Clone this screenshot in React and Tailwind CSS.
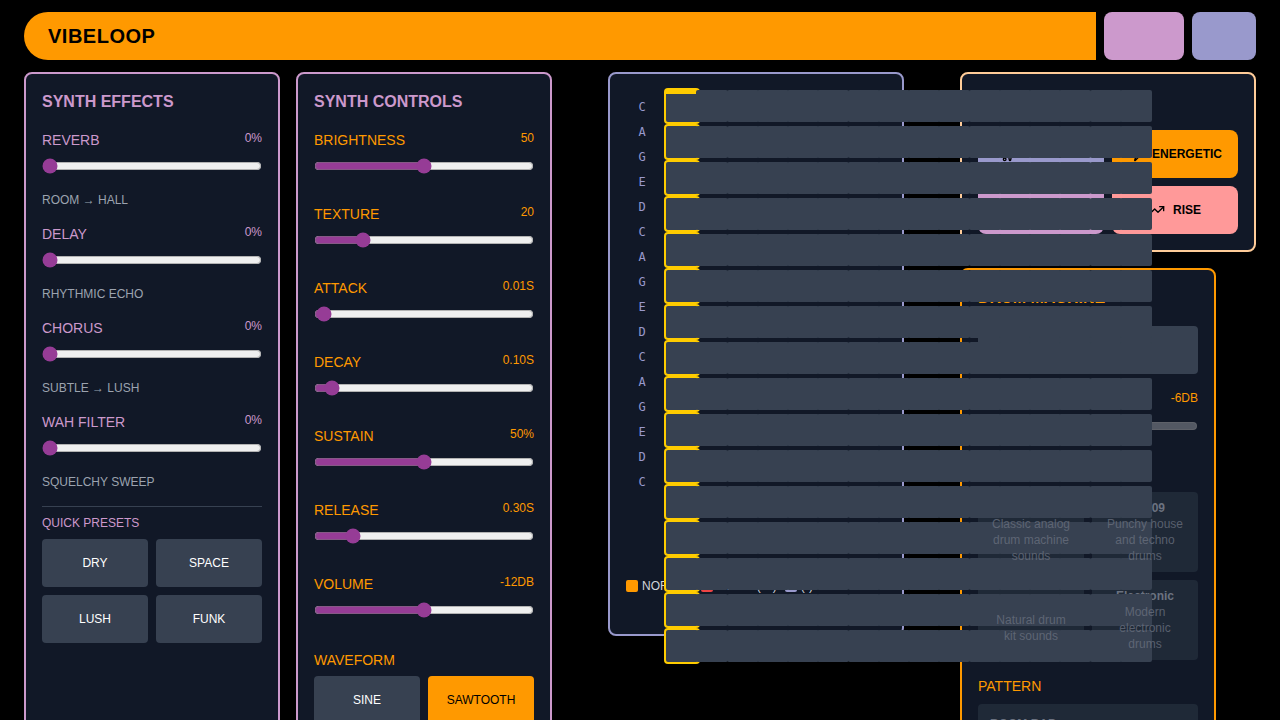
import React, { useState } from "react";
import { Sparkles, TrendingUp, Zap } from "lucide-react";

const NOTES = ["C", "A", "G", "E", "D", "C", "A", "G", "E", "D", "C", "A", "G", "E", "D", "C"];
const STEPS = Array.from({ length: 16 }, (_, i) => i);

const EFFECTS = [
  { label: "REVERB", hint: "ROOM → HALL" },
  { label: "DELAY", hint: "RHYTHMIC ECHO" },
  { label: "CHORUS", hint: "SUBTLE → LUSH" },
  { label: "WAH FILTER", hint: "SQUELCHY SWEEP" },
];

const CONTROLS = [
  { label: "BRIGHTNESS", text: "50", pos: 50 },
  { label: "TEXTURE", text: "20", pos: 20 },
  { label: "ATTACK", text: "0.01S", pos: 1 },
  { label: "DECAY", text: "0.10S", pos: 5 },
  { label: "SUSTAIN", text: "50%", pos: 50 },
  { label: "RELEASE", text: "0.30S", pos: 15 },
  { label: "VOLUME", text: "-12DB", pos: 50 },
];

const KITS = [
  { name: "TR-808", info: "Classic analog drum machine sounds" },
  { name: "TR-909", info: "Punchy house and techno drums" },
  { name: "Acoustic", info: "Natural drum kit sounds" },
  { name: "Electronic", info: "Modern electronic drums" },
];

function Fader({ label, text, start, disabled }) {
  const [value, setValue] = useState(start);
  return (
    <div>
      <div className="flex items-start justify-between">
        <label htmlFor={label} className="text-sm leading-5">{label}</label>
        <span className="text-xs leading-4">{text}</span>
      </div>
      <input
        id={label}
        type="range"
        min="0"
        max="100"
        value={value}
        disabled={disabled}
        onChange={(e) => setValue(Number(e.target.value))}
        className="mt-2 block h-4 w-full accent-[#963c96]"
      />
    </div>
  );
}

function Choice({ children, active }) {
  return (
    <button
      type="button"
      className={
        active
          ? "h-12 rounded bg-[#ff9900] text-xs text-black"
          : "h-12 rounded bg-[#374151] text-xs font-medium text-white"
      }
    >
      {children}
    </button>
  );
}

function SynthEffects() {
  return (
    <section className="w-64 rounded-lg border-2 border-[#cc99cc] bg-[#111827] p-4 text-[#cc99cc]">
      <h2 className="mb-4 text-base leading-6 font-bold">SYNTH EFFECTS</h2>
      <div className="flex flex-col gap-4">
        {EFFECTS.map((fx) => (
          <div key={fx.label}>
            <Fader label={fx.label} text="0%" start={0} />
            <p className="mt-[18px] text-xs leading-4 text-[#9ca3af]">{fx.hint}</p>
          </div>
        ))}
      </div>
      <div className="mt-4 border-t border-[#374151] pt-2">
        <h3 className="mb-2 text-xs leading-4">QUICK PRESETS</h3>
        <div className="grid grid-cols-2 gap-2">
          <Choice>DRY</Choice>
          <Choice>SPACE</Choice>
          <Choice>LUSH</Choice>
          <Choice>FUNK</Choice>
        </div>
      </div>
    </section>
  );
}

function SynthControls() {
  return (
    <section className="w-64 rounded-lg border-2 border-[#cc99cc] bg-[#111827] p-4 text-[#ff9900]">
      <h2 className="mb-4 text-base leading-6 font-bold text-[#cc99cc]">SYNTH CONTROLS</h2>
      <div className="flex flex-col gap-[30px]">
        {CONTROLS.map((c) => (
          <Fader key={c.label} label={c.label} text={c.text} start={c.pos} />
        ))}
        <div>
          <h3 className="mb-1 text-sm leading-6">WAVEFORM</h3>
          <div className="grid grid-cols-2 gap-2">
            <Choice>SINE</Choice>
            <Choice active>SAWTOOTH</Choice>
          </div>
        </div>
      </div>
    </section>
  );
}

function LegendItem({ swatch, children }) {
  return (
    <span className="flex items-center gap-1 whitespace-nowrap">
      <span className={"size-3 rounded-xs " + swatch} />
      {children}
    </span>
  );
}

function Sequencer() {
  return (
    <section className="min-w-0 flex-1 rounded-lg border-2 border-[#9999cc] bg-[#111827] p-4">
      <div className="flex h-[488px] gap-2">
        <div className="w-8 shrink-0 pt-[5px] text-center font-['DejaVu_Sans_Mono',monospace] text-xs leading-[25px] text-[#9999cc]">
          {NOTES.map((n, i) => (
            <div key={i}>{n}</div>
          ))}
        </div>
        <div className="flex w-[484px] shrink-0 flex-col gap-1">
          {NOTES.map((n, row) => (
            <div key={row} className="flex">
              {STEPS.map((step) => (
                <div key={step} className="min-w-0 flex-1">
                  <button
                    type="button"
                    aria-label={n + " step " + (step + 1)}
                    className={
                      step === 0
                        ? "relative block h-8 w-8 rounded-xs bg-[#374151] ring-2 ring-[#ffcc00]"
                        : "relative block h-8 w-8 rounded-xs bg-[#374151]"
                    }
                  >
                    {row === 0 && step === 0 && (
                      <span className="absolute inset-x-0 top-0 h-1 bg-[#ffcc00]" />
                    )}
                  </button>
                </div>
              ))}
            </div>
          ))}
        </div>
      </div>
      <div className="flex h-10 items-start gap-2 text-xs leading-4 text-[#d1d5db]">
        <LegendItem swatch="bg-[#ff9900]">NORMAL</LegendItem>
        <LegendItem swatch="bg-[#ef4444]">GLIDE (→)</LegendItem>
        <LegendItem swatch="bg-[#9999cc]">(•)</LegendItem>
      </div>
    </section>
  );
}

function Vibe({ color, icon: Icon, children }) {
  return (
    <button
      type="button"
      className={"flex h-12 items-center justify-center gap-2 rounded-lg text-xs font-bold text-black " + color}
    >
      {Icon && <Icon className="size-4" />}
      {children}
    </button>
  );
}

function DrumMachine() {
  return (
    <section className="w-64 rounded-lg border-2 border-[#ff9900] bg-[#111827] p-4 text-[#ff9900]">
      <h2 className="mb-4 text-base leading-6 font-bold">DRUM MACHINE</h2>
      <button type="button" aria-label="Toggle drums" className="mb-4 block h-12 w-full rounded bg-[#374151]" />
      <Fader label="DRUMS" text="-6DB" start={50} disabled />
      <h3 className="mt-[30px] mb-1 text-sm leading-6">KIT</h3>
      <div className="grid grid-cols-2 gap-2">
        {KITS.map((kit) => (
          <button
            key={kit.name}
            type="button"
            disabled
            className="h-20 rounded bg-[#1f2937] px-3 py-2 text-xs leading-4 text-[#6b7280]"
          >
            <span className="block font-bold">{kit.name}</span>
            <span className="block opacity-75">{kit.info}</span>
          </button>
        ))}
      </div>
      <h3 className="mt-4 mb-2 text-sm leading-5">PATTERN</h3>
      <button
        type="button"
        disabled
        className="block w-full rounded bg-[#1f2937] p-3 text-left text-xs leading-4 font-bold text-[#6b7280]"
      >
        BOOM BAP
      </button>
    </section>
  );
}

export default function App() {
  return (
    <div className="min-h-screen bg-black px-6 py-3 font-['Helvetica_Neue',Helvetica,'Liberation_Sans',sans-serif]">
      <header className="mb-3 flex h-12 gap-2">
        <div className="flex flex-1 items-center rounded-l-full bg-[#ff9900] px-6">
          <h1 className="text-xl leading-7 font-bold tracking-wide text-black">VIBELOOP</h1>
        </div>
        <div className="w-20 rounded-lg bg-[#cc99cc]" />
        <div className="w-16 rounded-lg bg-[#9999cc]" />
      </header>
      <main className="flex items-start gap-14">
        <div className="flex shrink-0 gap-4">
          <SynthEffects />
          <SynthControls />
        </div>
        <Sequencer />
        <div className="flex w-[296px] shrink-0 flex-col gap-4">
          <section className="rounded-lg border-2 border-[#ffcc99] bg-[#111827] p-4 pt-14">
            <div className="grid grid-cols-2 gap-2">
              <Vibe color="bg-[#9999cc]" icon={Sparkles}>AMBIENT</Vibe>
              <Vibe color="bg-[#ff9900]" icon={Zap}>ENERGETIC</Vibe>
              <Vibe color="bg-[#cc99cc]">DROP</Vibe>
              <Vibe color="bg-[#ff9999]" icon={TrendingUp}>RISE</Vibe>
            </div>
          </section>
          <DrumMachine />
        </div>
      </main>
    </div>
  );
}
